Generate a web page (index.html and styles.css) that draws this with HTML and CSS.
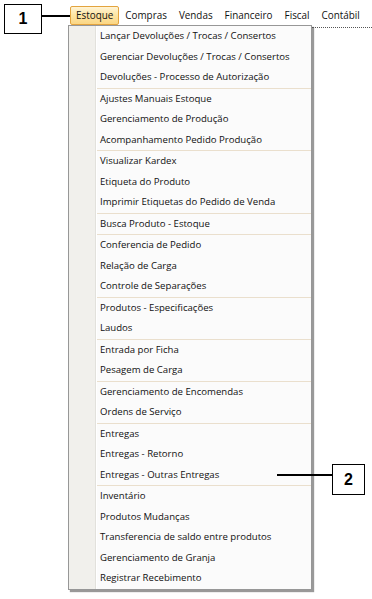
FILE: index.html
```html
<!DOCTYPE html>
<html lang="pt-BR">
<head>
<meta charset="utf-8">
<title>Menu Estoque</title>
<link rel="stylesheet" href="styles.css">
</head>
<body>
<div class="screen">
  <div class="window">
    <div class="menubar">
      <span class="mb-item active">Estoque</span>
      <span class="mb-item">Compras</span>
      <span class="mb-item">Vendas</span>
      <span class="mb-item">Financeiro</span>
      <span class="mb-item">Fiscal</span>
      <span class="mb-item">Contábil</span>
    </div>
    <div class="below">
      <div class="menu">
        <div class="item">Lançar Devoluções / Trocas / Consertos</div>
        <div class="item">Gerenciar Devoluções / Trocas / Consertos</div>
        <div class="item">Devoluções - Processo de Autorização</div>
        <div class="sep"></div>
        <div class="item">Ajustes Manuais Estoque</div>
        <div class="item">Gerenciamento de Produção</div>
        <div class="item">Acompanhamento Pedido Produção</div>
        <div class="sep"></div>
        <div class="item">Visualizar Kardex</div>
        <div class="item">Etiqueta do Produto</div>
        <div class="item">Imprimir Etiquetas do Pedido de Venda</div>
        <div class="sep"></div>
        <div class="item">Busca Produto - Estoque</div>
        <div class="sep"></div>
        <div class="item">Conferencia de Pedido</div>
        <div class="item">Relação de Carga</div>
        <div class="item">Controle de Separações</div>
        <div class="sep"></div>
        <div class="item">Produtos - Especificações</div>
        <div class="item">Laudos</div>
        <div class="sep"></div>
        <div class="item">Entrada por Ficha</div>
        <div class="item">Pesagem de Carga</div>
        <div class="sep"></div>
        <div class="item">Gerenciamento de Encomendas</div>
        <div class="item">Ordens de Serviço</div>
        <div class="sep"></div>
        <div class="item">Entregas</div>
        <div class="item">Entregas - Retorno</div>
        <div class="item">Entregas - Outras Entregas</div>
        <div class="sep"></div>
        <div class="item">Inventário</div>
        <div class="item">Produtos Mudanças</div>
        <div class="item">Transferencia de saldo entre produtos</div>
        <div class="item">Gerenciamento de Granja</div>
        <div class="item">Registrar Recebimento</div>
      </div>
      <div class="pane"></div>
    </div>
  </div>

  <div class="callout callout-1">1</div>
  <div class="leader leader-1"></div>
  <div class="callout callout-2">2</div>
  <div class="leader leader-2"></div>
</div>
</body>
</html>
```
FILE: styles.css
```css
html, body {
  margin: 0;
  padding: 0;
  background: #ffffff;
}

body {
  font-family: "Open Sans", "Liberation Sans", sans-serif;
  font-size: 9.6px;
  color: #111111;
}

.screen {
  position: relative;
  width: 372px;
  height: 599px;
  overflow: hidden;
}

.window {
  padding: 6px 0 0 68px;
}

.menubar {
  display: flex;
  height: 19px;
  margin-left: 2px;
  font-size: 9.9px;
}

.mb-item {
  box-sizing: border-box;
  height: 19px;
  line-height: 17px;
  padding: 0 5px;
  border: 1px solid transparent;
  border-radius: 2px;
  white-space: nowrap;
}

.mb-item.active {
  border-color: #e3a43f;
  background: linear-gradient(#fff4d6, #fde6a6 45%, #fbd684);
}

.below {
  display: flex;
  align-items: flex-start;
}

.menu {
  width: 244px;
  box-sizing: border-box;
  border: 1px solid #979797;
  background: linear-gradient(to right,
    #f1f0ec 0, #f1f0ec 26px,
    #e2e1dc 26px, #e2e1dc 27px,
    #ffffff 27px, #ffffff 28px,
    #fbfbfb 28px);
  box-shadow: 2px 2px 1px rgba(0, 0, 0, 0.4);
}

.item {
  height: 20.5px;
  line-height: 20.5px;
  padding-left: 31px;
  white-space: nowrap;
}

.sep {
  height: 1px;
  margin-left: 28px;
  background: #eadfcd;
}

.pane {
  flex: 1;
  margin-top: 2px;
  border-top: 1px dotted #555555;
}

.callout {
  position: absolute;
  box-sizing: border-box;
  border: 1.5px solid #000000;
  background: #ffffff;
  font-family: "Liberation Sans", Arial, sans-serif;
  font-weight: bold;
  font-size: 16px;
  color: #000000;
  display: flex;
  align-items: center;
  justify-content: center;
}

.callout-1 {
  left: 4px;
  top: 4px;
  width: 38px;
  height: 30px;
}

.callout-2 {
  left: 332px;
  top: 464px;
  width: 33px;
  height: 31px;
}

.leader {
  position: absolute;
  height: 1.5px;
  background: #000000;
}

.leader-1 {
  left: 42px;
  top: 15px;
  width: 28px;
}

.leader-2 {
  left: 277px;
  top: 474px;
  width: 55px;
}
```
